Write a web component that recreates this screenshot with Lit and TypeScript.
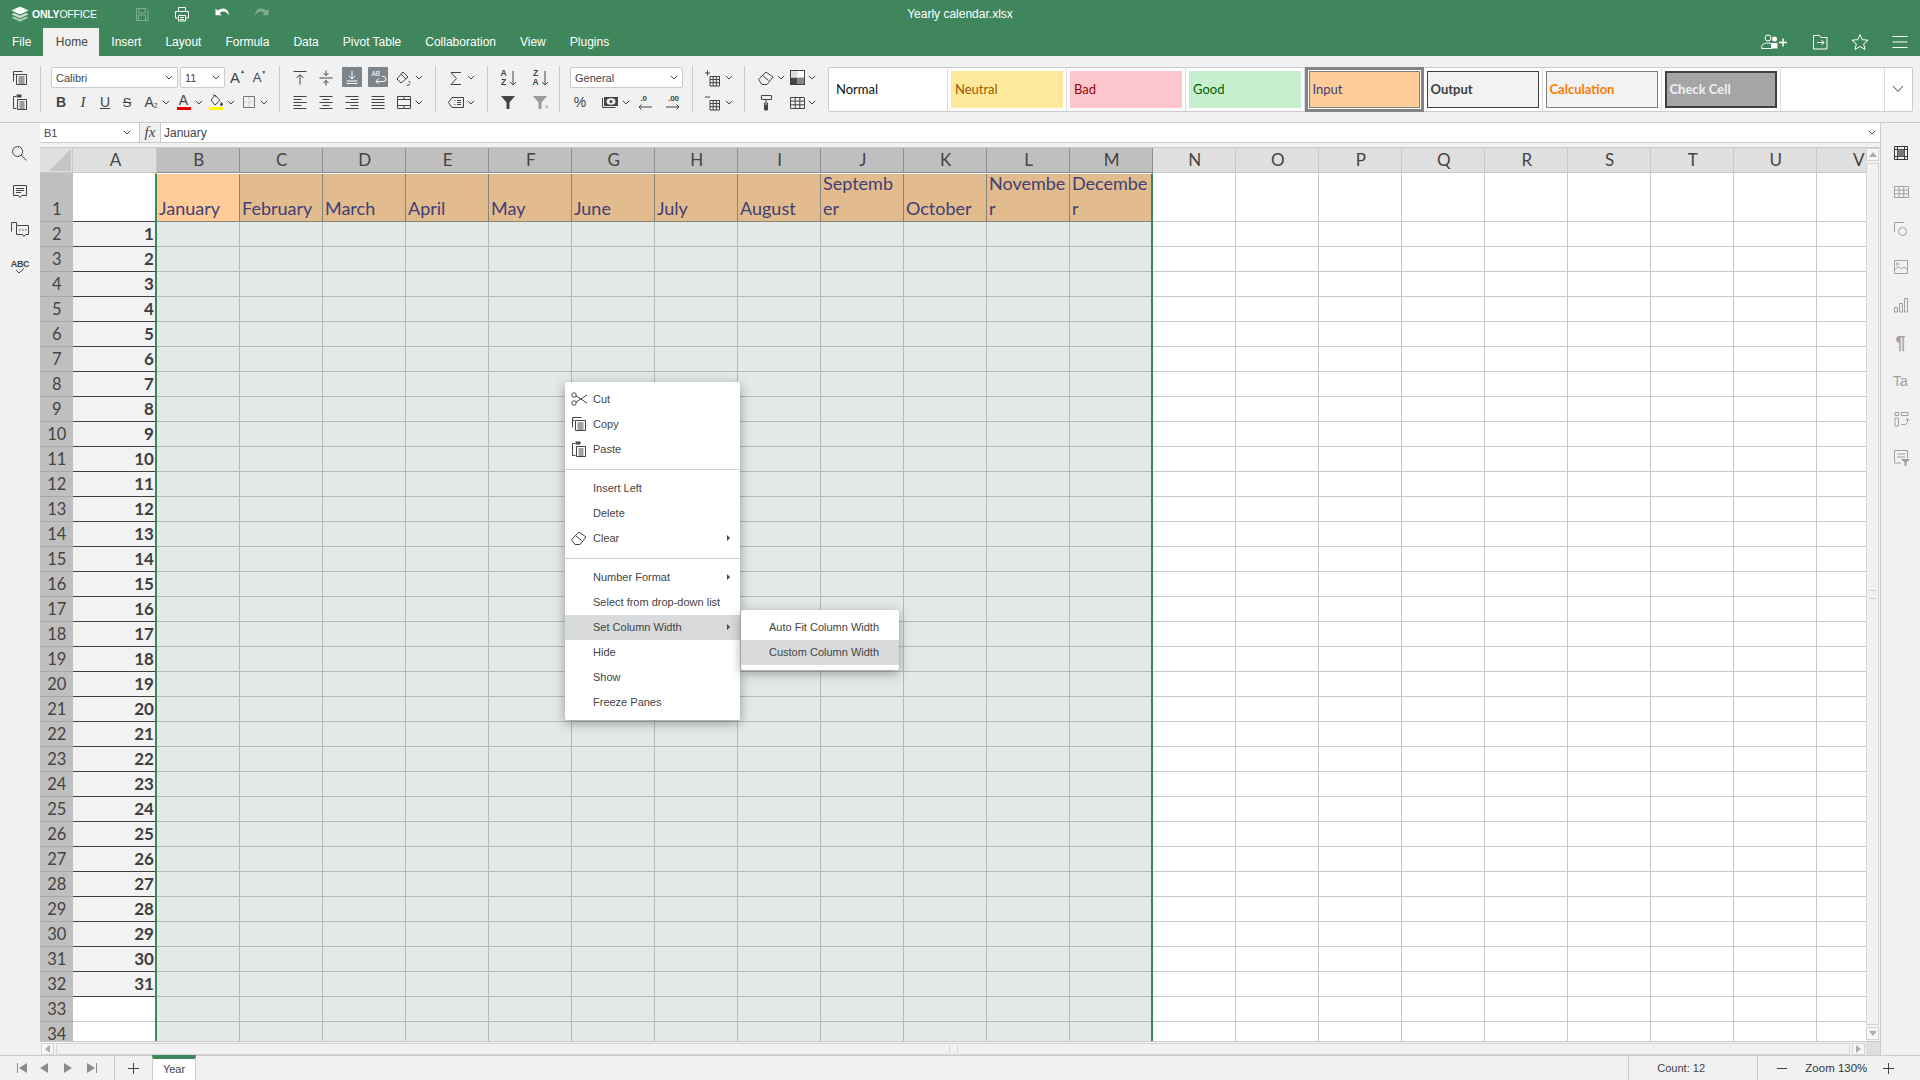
import { LitElement, html, css } from "lit";
import { customElement } from "lit/decorators.js";

const ic = (d: string, cls = "", w = 20, h = 20) =>
  html`<svg class="ic ${cls}" width=${w} height=${h} viewBox="0 0 ${w} ${h}"><path d=${d}></path></svg>`;
const chev = html`<svg class="chev" width="8" height="5" viewBox="0 0 8 5"><path d="M.8.8 4 4 7.2.8"></path></svg>`;
const D = {
  copy: "M3.500 13.500v-10h9 M3.500 6.500h2 M6.500 6.500h10v10h-10z M8.500 9h6 M8.500 11h6 M8.500 13h6 M8.500 15h6",
  paste: "M6 4.500H3.500v12h3 M7.500 7.500h9v10h-9z M9.500 10h5 M9.500 12h5 M9.500 14h5 M9.500 16h5",
  save: "M5 4.500h9l2 2v10H4.500v-12z M7 5v4h6V5 M6.500 16v-5h7v5",
  print: "M6.500 7V3.500h7V7 M6.500 14h-3V7.500h13V14h-3 M6.500 11.500h7v5.500h-7z M8 13.500h4 M8 15.500h4",
  undo: "M3.500 5v6.300h6.300L7.500 9c1-.9 2.200-1.500 3.600-1.500 2.500 0 4.400 1.400 5.400 3.800.9-3.700-2-6.800-5.500-6.800-1.800 0-3.400.7-4.700 1.900z",
  redo: "M16.500 5v6.300h-6.300L12.500 9c-1-.9-2.200-1.500-3.600-1.500-2.500 0-4.400 1.400-5.400 3.800-.9-3.700 2-6.800 5.500-6.800 1.800 0 3.400.7 4.700 1.900z",
  ttop: "M3.500 3.500h13 M10 16.500V7 M6.500 10 10 6.500l3.500 3.500",
  tmid: "M3.500 10h13 M10 2.500v5 M7.500 5 10 7.500 12.500 5 M10 17.500v-5 M7.500 15 10 12.500 12.500 15",
  tbot: "M4.500 16.500h11 M4.500 14h11 M10 4v8 M7 9l3 3 3-3",
  wrap: "M14 9.500h1.500a2.500 2.500 0 0 1 0 5H8 M10.500 11.500 8 14.500l2.500 2.500",
  orient: "M3 11l6-7 5 5-7 6z M7 6l5 5 M14.500 13l2 2M16 16.500l-3 1",
  left: "M3.500 4.500h13 M3.500 7.500h8 M3.500 10.500h13 M3.500 13.500h8 M3.500 16.500h13",
  center: "M3.500 4.500h13 M6.500 7.500h7 M3.500 10.500h13 M6.500 13.500h7 M3.500 16.500h13",
  right: "M3.500 4.500h13 M8.500 7.500h8 M3.500 10.500h13 M8.500 13.500h8 M3.500 16.500h13",
  just: "M3.500 4.500h13 M3.500 7.500h13 M3.500 10.500h13 M3.500 13.500h13 M3.500 16.500h13",
  merge: "M3.500 4.500h13v12h-13z M3.500 7.500h13 M3.500 13.500h13 M10 13.500v3 M10 4.500v3",
  sum: "M15 4.500H5l5.500 6-5.500 6h10",
  named: "M6 5.500h11.500v10H6L2.500 10.500z M8.500 8.500h1 M8.500 12.500h1 M11 8.500h4 M11 10.500h4 M11 12.500h4",
  arrowDown: "M4 1v14 M1 12l3 3 3-3",
  filterFill: "M3 4h14l-5.500 6.500V17h-3v-6.500z",
  eraser: "M2.500 11.500 10 4l7 5-6 7.500H6z M6.500 7.500l6 5",
  moneyBack: "M1.500 6v9.500h13",
  decL: "M18 15H5 M7.500 12.500 5 15l2.500 2.500",
  decR: "M2 15h13 M12.500 12.500 15 15l-2.500 2.500",
  inscell: "M6 8.500h9.500v9.500H6z M6 11.500h9.500 M6 14.700h9.500 M9.200 8.500v9.500 M12.300 8.500v9.500 M1 5h5 M3.500 2.500v5",
  delcell: "M6 8.500h9.500v9.500H6z M6 11.500h9.500 M6 14.700h9.500 M9.200 8.500v9.500 M12.300 8.500v9.500 M1 5h5",
  table: "M3.500 5.500h14v11h-14z M3.500 9.100h14 M3.500 12.800h14 M8.200 5.500v11 M12.800 5.500v11",
  search: "M12.600 8.500a5 5 0 1 1-10 0 5 5 0 0 1 10 0z M11.200 12 16.500 17.500",
  comment: "M3.500 4.500h13v10h-5l-1.500 2-1.500-2h-5z M6 7.500h8 M6 9.500h8 M6 11.500h5",
  chat: "M6.500 6.500V3.500h-5v9 M6.500 6.500h12v9h-3L14 17.500 12.500 15.500h-6z M9 11h1.500 M12 11h1.500 M15 11h1.500",
  shape: "M3.500 13V3.500H13 M11.500 8.500a4 4 0 1 1 0 8 4 4 0 0 1 0-8z",
  image: "M3.500 3.500h13v13h-13z M3.500 13l4-3.500 3 2.500 2.500-2 3.500 3 M7.500 7a1 1 0 1 1-2 0 1 1 0 0 1 2 0z",
  chart: "M3.500 12.500h3v4.500h-3z M8.500 8.500h3v8.500h-3z M13.500 3.500h3v13.500h-3z",
  textart: "M5 14c2-3 8-3 10 0",
  pivot: "M4 3.500h3.500v3H4z M10 3.500h7v3h-7z M4 9h3.500v8H4z M10 15.500h4.500l2-2V10 M14.500 11.500l2-2 2 2",
  slicer: "M3.500 16V3.500h13v8 M6 7h8 M6 10h8 M3.500 16H10",
};

const COLS = "ABCDEFGHIJKLMNOPQRSTUV".split("");
const MONTHS = ["January","February","March","April","May","June","July","August","Septemb\ner","October","Novembe\nr","Decembe\nr"];

@customElement("app-root")
export class AppRoot extends LitElement {
  static styles = css`
    :host { display: block; height: 100vh; font-family: "Liberation Sans", Arial, sans-serif; font-size: 11px; color: #444; }
    * { box-sizing: border-box; }
    .app { position: relative; height: 100%; display: flex; flex-direction: column; background: #f1f1f1; overflow: hidden; }
    .ic { display: block; flex: none; fill: none; stroke: currentColor; stroke-width: 1; }
    .chev { display: block; flex: none; fill: none; stroke: #444; stroke-width: 1; }
    .solid { fill: currentColor; stroke: none; }

    .title { height: 28px; background: #40865c; color: #fff; display: flex; align-items: center; position: relative; flex: none; }
    .logo { display: flex; align-items: center; margin-left: 11px; width: 111px; gap: 3px; }
    .logo b { font-size: 10.500px; letter-spacing: -.2px; font-weight: 700; }
    .logo i { font-style: normal; font-weight: 400; }
    .qa { width: 40px; display: flex; justify-content: center; }
    .dim { color: #7fae91; }
    .doc { position: absolute; left: 0; right: 0; text-align: center; font-size: 12px; }

    .tabs { height: 28px; background: #40865c; color: #fff; display: flex; align-items: stretch; font-size: 12px; flex: none; }
    .tab { padding: 0 12px; display: flex; align-items: center; }
    .tab.on { background: #f1f1f1; color: #444; padding: 0 11.500px 0 12.500px; }
    .tabs .sp { flex: 1; }
    .hic { width: 40px; display: flex; align-items: center; justify-content: center; margin-top: -1px; }
    .hic.fo { margin-left: 6px; }

    .tb { height: 67px; flex: none; display: flex; align-items: center; border-bottom: 1px solid #cbcbcb; }
    .g { height: 46px; padding-top: 1px; display: flex; flex-direction: column; gap: 3.500px; flex: none; border-right: 1px solid #cbcbcb; justify-content: flex-start; }
    .g.last { border-right: 0; }
    .r { height: 21px; display: flex; align-items: center; flex: none; }
    .g0 { width: 41px; }
    .g1 { width: 239px; padding-left: 10px; }
    .g2 { width: 156px; padding-left: 7px; }
    .g3 { width: 52px; padding-left: 10px; }
    .g4 { width: 72px; padding-left: 4px; }
    .g5 { width: 133px; padding-left: 10px; }
    .g6 { width: 52px; padding-left: 11px; }
    .g7 { width: 82.500px; padding-left: 11px; }
    .c { width: 20px; display: flex; justify-content: center; align-items: center; flex: none; font-size: 14px; color: #444; height: 20px; }
    .g0 .c { margin-left: 10px; }
    .w22 { width: 22px; }
    .firstb { margin-left: -1px; }
    .bc { display: flex; align-items: center; flex: none; width: 32.500px; }
    .bc .c { margin-right: 1px; }
    .bcn { width: 31px; }
    .act { background: #7d858c; border-radius: 1px; color: #fff; width: 20px; height: 20px; margin-top: -2px; }
    .cwrap { width: 26px; display: flex; justify-content: center; flex: none; }
    .combo { height: 21px; background: #fff; border: 1px solid #cbcbcb; border-radius: 2px; display: flex; align-items: center; justify-content: space-between; padding: 0 4px; flex: none; color: #444; }
    .cf { width: 127px; }
    .cs { width: 44.500px; margin-left: 2px; }
    .cg { width: 113px; }
    .ab { width: 22px; display: flex; justify-content: center; font-size: 15px; }
    .ab.big { margin-left: 2px; }
    .ab.sm { font-size: 13px; }
    .ab small { font-size: 5px; position: relative; top: -1px; }
    .fmt-b { font-weight: 700; }
    .fmt-i { font-style: italic; font-family: "Liberation Serif"; font-size: 15px; }
    .fmt-u { text-decoration: underline; }
    .fmt-s { text-decoration: line-through; font-size: 13px; }
    .cl { flex-direction: column; line-height: 13px; }
    .bar { display: block; width: 14px; height: 3px; }
    .red { background: #e00; }
    .yel { background: #ff0; }
    .sub { font-size: 7px; position: relative; top: 3px; }
    .mL11 { margin-left: 11px; }
    .mL10 { margin-left: 10px; }
    .mL3 { margin-left: 3px; }
    .mR11 { margin-right: 11px; }
    .azc { font-size: 8.500px; font-weight: 700; line-height: 9px; display: flex; flex-direction: column; width: 8px; text-align: center; }
    .sortc { width: 32px; display: flex; justify-content: center; align-items: center; flex: none; height: 20px; gap: 1px; }
    .fclear { color: #9a9a9a; position: relative; }
    .fclear i { position: absolute; right: 7px; bottom: 1px; font-size: 8px; font-style: normal; line-height: 8px; }
    .pct { font-size: 14px; }
    .dec { position: relative; width: 20px; height: 20px; font-size: 8px; font-weight: 700; display: block; flex: none; text-align: center; line-height: 14px; }
    .dec .ic { position: absolute; left: 0; top: 0; }
    .gal { width: 1085px; height: 45px; background: #fff; border: 1px solid #cbcbcb; border-radius: 2px; display: flex; flex: none; }
    .gi { width: 119px; border-right: 1px solid #dcdcdc; padding: 3px 3px; flex: none; font-family: Lato, "Liberation Sans", sans-serif; font-size: 13px; }
    .gi span { display: flex; align-items: center; height: 100%; padding-left: 4.500px; }
    .gi.sel { border: 3px solid #848484; padding: 1px 0; margin: -1px 0; height: 45px; }
    .gi.sel span { margin: 0 1px; padding-left: 3px; }
    .s-normal { color: #111; }
    .s-neutral { background: #fee99b; color: #9c5700; }
    .s-bad { background: #fec7ce; color: #9c0006; }
    .s-good { background: #c6efce; color: #006100; }
    .s-input { background: #ffcc99; color: #3f3f76; border: 1px solid #7f7f7f; }
    .gi span.s-output { padding-left: 3px; background: #f2f2f2; color: #3f3f3f; border: 1px solid #3f3f3f; font-weight: 700; }
    .gi span.s-calc { padding-left: 3px; background: #f2f2f2; color: #fa7d00; border: 1px solid #7f7f7f; font-weight: 700; }
    .gi span.s-check { padding-left: 3px; background: #a5a5a5; color: #f2f2f2; border: 2px solid #3f3f3f; font-weight: 700; }
    .gfill { width: 104px; border-right: 1px solid #dcdcdc; flex: none; }
    .gmore { flex: 1; display: flex; align-items: center; justify-content: center; }
    .gmore svg { fill: none; stroke: #444; }

    .main { flex: 1; min-height: 0; display: flex; }
    .lp { width: 40px; flex: none; padding-top: 11px; display: flex; flex-direction: column; align-items: center; }
    .lp div { height: 38px; display: flex; align-items: center; justify-content: center; }
    .abc { font-size: 9px; font-weight: 700; display: flex; flex-direction: column; align-items: center; line-height: 8px; letter-spacing: -.3px; }
    .rp { width: 40px; flex: none; border-left: 1px solid #cbcbcb; padding-top: 11px; display: flex; flex-direction: column; align-items: center; color: #a0a0a0; }
    .rp div { height: 38px; display: flex; align-items: center; justify-content: center; }
    .rp .on { color: #333; }
    .para { font-size: 18px; font-weight: 700; }
    .ta { font-size: 14px; flex-direction: column; line-height: 12px; }
    .ta svg { margin-top: -9px; height: 10px; }
    .center { flex: 1; min-width: 0; display: flex; flex-direction: column; }
    .fb { height: 20px; flex: none; background: #fff; display: flex; align-items: center; border-bottom: 1px solid #cbcbcb; }
    .name { width: 100px; height: 100%; display: flex; align-items: center; justify-content: space-between; padding: 0 8px 0 4px; border-right: 1px solid #cbcbcb; flex: none; }
    .fxb { width: 21px; height: 100%; background: #f1f1f1; border-right: 1px solid #cbcbcb; font-family: "Liberation Serif"; font-style: italic; font-size: 15px; display: flex; align-items: center; justify-content: center; flex: none; }
    .ftxt { flex: 1; padding-left: 3px; font-size: 12px; }
    .fchev { padding-right: 4px; }
    .split { height: 4px; flex: none; }
    .wk { flex: 1; min-height: 0; display: flex; }
    .sheet { flex: 1; min-width: 0; position: relative; overflow: hidden; background: #fff; border-top: 1px solid #cbcbcb; }
    .grid { display: grid; grid-template-columns: 33.400px 83.600px repeat(21, 83px); grid-template-rows: 25px 49px repeat(33, 25px); }
    .cell { border-right: 1px solid #c8c8c8; border-bottom: 1px solid #c8c8c8; font-family: Lato, sans-serif; display: flex; overflow: hidden; min-width: 0; }
    .corner { background: #dfdfdf; display: flex; align-items: flex-end; justify-content: flex-end; padding: 0 1px 1px 0; }
    .ch { background: #dfdfdf; font-size: 17px; justify-content: center; align-items: center; color: #444; padding: 0 0 2px 1.500px; }
    .ch.sel { background: #bfbfbf; border-color: #8f8f8f; }
    .rh { background: #bfbfbf; border-right: 0; border-bottom-color: #a8a8a8; font-size: 16.500px; justify-content: center; align-items: flex-end; line-height: 24px; color: #444; }
    .aval { background: #f2f2f2; border-bottom-color: #3f3f3f; color: #3f3f3f; font-weight: 700; font-size: 17px; justify-content: flex-end; align-items: flex-end; padding-right: 3px; line-height: 24px; border-right: 0; }
    .a1c { border-bottom-color: #3f3f3f; border-right: 0; }
    .sel-c { background: #e3e9e5; border-color: #b4bab6; }
    .m { background: #e2bc8e; border-color: #86857c; color: #3f3f76; font-size: 18px; line-height: 25px; white-space: pre; align-items: flex-end; padding-left: 2px; }
    .m.first { background: #ffcc99; }
    .selbox { position: absolute; left: 115.300px; width: 998.200px; top: 25px; height: 900px; border-left: 2px solid #40865c; border-right: 2px solid #40865c; border-top: 1px solid #fff; pointer-events: none; }
    .vs { width: 14px; flex: none; padding: 0 1px 1px 0; display: flex; flex-direction: column; gap: 2px; background: #f1f1f1; border-top: 1px solid #cbcbcb; }
    .sbtn { width: 13px; height: 13px; border: 1px solid #d4d4d4; background: #f7f7f7; flex: none; display: flex; align-items: center; justify-content: center; }
    .tri { width: 0; height: 0; border-style: solid; border-color: transparent; }
    .tu { border-width: 0 4px 5px; border-bottom-color: #adadad; }
    .td { border-width: 5px 4px 0; border-top-color: #adadad; }
    .tl { border-width: 4px 5px 4px 0; border-right-color: #adadad; }
    .tr { border-width: 4px 0 4px 5px; border-left-color: #adadad; }
    .track { flex: 1; border: 1px solid #d4d4d4; display: flex; align-items: center; justify-content: center; }
    .gv { width: 7px; height: 9px; border-top: 1px solid #cfcfcf; border-bottom: 1px solid #cfcfcf; }
    .gv2 { width: 9px; height: 7px; border-left: 1px solid #cfcfcf; border-right: 1px solid #cfcfcf; }
    .hs { height: 14px; flex: none; display: flex; background: #f1f1f1; border-top: 1px solid #cbcbcb; }
    .hsc { flex: 1; display: flex; padding: 1px; gap: 2px; }
    .hsc .track { height: 12px; }
    .hsc .sbtn { height: 12px; }
    .corner2 { width: 14px; background: #dedede; flex: none; }

    .st { height: 25px; flex: none; border-top: 1px solid #cbcbcb; display: flex; align-items: stretch; }
    .nav { width: 115px; border-right: 1px solid #cbcbcb; display: flex; align-items: center; padding-left: 16px; gap: 12px; }
    .nb { width: 12px; display: flex; align-items: center; justify-content: center; }
    .nb.tight { margin-left: -2px; }
    .nb svg { fill: #8c8c8c; }
    .add { width: 37px; display: flex; align-items: center; justify-content: center; }
    .add svg, .zb svg { stroke: #444; fill: none; }
    .ytab { width: 44px; background: #fff; border: 1px solid #cbcbcb; border-width: 4px 1px 0; border-top-color: #40865c; display: flex; align-items: center; justify-content: center; margin-top: -1px; padding-bottom: 1px; }
    .st .sp { flex: 1; }
    .cnt { width: 130px; border-left: 1px solid #cbcbcb; border-right: 1px solid #cbcbcb; display: flex; align-items: center; padding-left: 28px; }
    .zm { display: flex; align-items: center; width: 161.700px; }
    .zb { width: 47px; display: flex; justify-content: center; }
    .zt { width: 60px; text-align: center; font-size: 11.500px; white-space: nowrap; color: #333; }

    .menu { position: absolute; background: #fff; border-radius: 2px; box-shadow: 0 3px 12px rgba(0,0,0,.35); padding: 5px 0; color: #444; white-space: nowrap; }
    .m1 { left: 565px; top: 382px; width: 175px; height: 338px; }
    .m2 { left: 741px; top: 610px; width: 158px; height: 60px; }
    .mi { height: 25px; display: flex; align-items: center; padding: 0 0 1px 28px; position: relative; }
    .mi.hl { background: #d8dadc; }
    .mi .mic { position: absolute; left: 4px; top: 2px; color: #444; }
    .mi .ar { position: absolute; right: 10px; top: 9px; width: 0; height: 0; border-style: solid; border-color: transparent; border-width: 3px 0 3px 3.500px; border-left-color: #444; }
    .mdiv { height: 1px; background: #d0d0d0; margin: 7px 0 6px; }
  `;

  private gridCells() {
    const cells: unknown[] = [];
    cells.push(html`<div class="cell corner"><svg width="22" height="22" viewBox="0 0 22 22"><path d="M22 0V22H0z" fill="#c4c4c4"></path></svg></div>`);
    COLS.forEach((c, i) => {
      cells.push(html`<div class="cell ch ${i >= 1 && i <= 12 ? "sel" : ""}">${c}</div>`);
    });
    for (let r = 1; r <= 34; r++) {
      cells.push(html`<div class="cell rh">${r}</div>`);
      COLS.forEach((_c, i) => {
        if (i === 0) {
          if (r === 1) cells.push(html`<div class="cell a1c"></div>`);
          else if (r <= 32) cells.push(html`<div class="cell aval">${r - 1}</div>`);
          else cells.push(html`<div class="cell"></div>`);
        } else if (i <= 12) {
          if (r === 1) cells.push(html`<div class="cell m ${i === 1 ? "first" : ""}">${MONTHS[i - 1]}</div>`);
          else cells.push(html`<div class="cell sel-c"></div>`);
        } else cells.push(html`<div class="cell"></div>`);
      });
    }
    return cells;
  }

  render() {
    const c = (d: string) => html`<div class="c">${ic(d)}</div>`;
    const scissors = html`<svg class="ic" width="20" height="20" viewBox="0 0 20 20"><circle cx="5" cy="6" r="2.200"></circle><circle cx="5" cy="14" r="2.200"></circle><path d="M7 7l11 7 M7 13l11-7"></path></svg>`;
    const pasteIcon = html`<svg class="ic" width="20" height="20" viewBox="0 0 20 20"><path d=${D.paste}></path><path d="M6.500 2.500h5v3h-5z" fill="#444" stroke="none"></path></svg>`;
    return html`<div class="app">
      <div class="title">
        <div class="logo">
          <svg width="18" height="16" viewBox="0 0 18 16" fill="#fff"><path d="M9 .5 17.500 4.500 9 8.500.5 4.500z"></path><path opacity=".75" d="M3 7 9 9.800 15 7l2.500 1.200L9 12.200.5 8.200z"></path><path opacity=".55" d="M3 10.500 9 13.300l6-2.800 2.500 1.200L9 15.700.5 11.700z"></path></svg>
          <b>ONLY<i>OFFICE</i></b>
        </div>
        <div class="qa dim">${ic(D.save)}</div>
        <div class="qa">${ic(D.print)}</div>
        <div class="qa">${ic(D.undo, "solid")}</div>
        <div class="qa dim">${ic(D.redo, "solid")}</div>
        <div class="doc">Yearly calendar.xlsx</div>
      </div>
      <div class="tabs">
        <div class="tab">File</div><div class="tab on">Home</div><div class="tab">Insert</div><div class="tab">Layout</div><div class="tab">Formula</div><div class="tab">Data</div><div class="tab">Pivot Table</div><div class="tab">Collaboration</div><div class="tab">View</div><div class="tab">Plugins</div>
        <div class="sp"></div>
        <div class="hic"><svg class="ic" width="28" height="20" viewBox="0 0 28 20"><circle cx="8" cy="6" r="3"></circle><path d="M1.500 16.500c0-4 2.500-5.500 6.500-5.500 1.500 0 2.500.2 3.500.7v4.800z"></path><circle cx="14.500" cy="7" r="2.500" fill="#fff" stroke="none"></circle><path d="M11.500 11h6v5.500h-6z" fill="#fff" stroke="none"></path><path d="M19 10.500h8 M23 6.500v8" stroke-width="1.500"></path></svg></div>
        <div class="hic fo">${ic("M3.500 3.500h6l1.500 2h6v11.500H3.500z M7 10.500h7 M11.500 8l2.500 2.500-2.500 2.500")}</div>
        <div class="hic">${ic("M10 2.500l2.300 5.200 5.700.5-4.300 3.700 1.300 5.600-5-3-5 3 1.300-5.600L2 8.200l5.700-.5z")}</div>
        <div class="hic">${ic("M2.500 4.500h15 M2.500 10h15 M2.500 15.500h15")}</div>
      </div>
      <div class="tb">
        <div class="g g0"><div class="r">${c(D.copy)}</div><div class="r"><div class="c">${pasteIcon}</div></div></div>
        <div class="g g1">
          <div class="r">
            <div class="combo cf">Calibri ${chev}</div><div class="combo cs">11 ${chev}</div>
            <div class="ab big">A<small>▲</small></div><div class="ab sm">A<small>▼</small></div>
          </div>
          <div class="r">
            <div class="c w22 fmt-b firstb">B</div><div class="c w22 fmt-i">I</div><div class="c w22 fmt-u">U</div><div class="c w22 fmt-s">S</div>
            <div class="bc mL3"><div class="c">A<span class="sub">2</span></div>${chev}</div>
            <div class="bc"><div class="c cl">A<i class="bar red"></i></div>${chev}</div>
            <div class="bc"><div class="c cl"><svg class="ic" width="16" height="13" viewBox="0 0 16 13"><path d="M7 1 3 6l4 5 5-4.500z M5 .5l3 2"></path><path d="M13.500 8.500l1 2a1 1 0 1 1-2 0z" fill="#444"></path></svg><i class="bar yel"></i></div>${chev}</div>
            <div class="bc"><div class="c"><svg class="ic" width="20" height="20" viewBox="0 0 20 20"><path d="M4.500 4.500h11v11h-11z" stroke="#777"></path><path d="M10 5v10 M5 10h10" stroke="#bbb" stroke-dasharray="1 1"></path></svg></div>${chev}</div>
          </div>
        </div>
        <div class="g g2">
          <div class="r">
            <div class="cwrap">${ic(D.ttop)}</div><div class="cwrap">${ic(D.tmid)}</div><div class="cwrap"><div class="c act">${ic(D.tbot)}</div></div>
            <div class="cwrap"><div class="c act"><svg class="ic" width="20" height="20" viewBox="0 0 20 20"><text x="3.500" y="9" font-size="6.500" fill="#fff" stroke="none" font-family="Liberation Sans">AB</text><path d=${D.wrap}></path></svg></div></div>
            <div class="bc mL3">${c(D.orient)}${chev}</div>
          </div>
          <div class="r">
            <div class="cwrap">${ic(D.left)}</div><div class="cwrap">${ic(D.center)}</div><div class="cwrap">${ic(D.right)}</div><div class="cwrap">${ic(D.just)}</div>
            <div class="bc mL3">${c(D.merge)}${chev}</div>
          </div>
        </div>
        <div class="g g3"><div class="r"><div class="bc">${c(D.sum)}${chev}</div></div><div class="r"><div class="bc">${c(D.named)}${chev}</div></div></div>
        <div class="g g4">
          <div class="r">
            <div class="sortc"><div class="azc"><span>A</span><span>Z</span></div>${ic(D.arrowDown, "", 8, 16)}</div>
            <div class="sortc"><div class="azc"><span>Z</span><span>A</span></div>${ic(D.arrowDown, "", 8, 16)}</div>
          </div>
          <div class="r">
            <div class="sortc">${ic(D.filterFill, "solid")}</div>
            <div class="sortc fclear">${ic(D.filterFill, "solid")}<i>×</i></div>
          </div>
        </div>
        <div class="g g5">
          <div class="r"><div class="combo cg">General ${chev}</div></div>
          <div class="r">
            <div class="c pct">%</div>
            <div class="bc mL11"><div class="c"><svg class="ic" width="20" height="20" viewBox="0 0 20 20"><path d=${D.moneyBack}></path><path d="M3 5h14v9H3z" fill="#444" stroke="none"></path><ellipse cx="10" cy="9.500" rx="4.500" ry="3.200" fill="#f1f1f1" stroke="none"></ellipse><circle cx="10" cy="9.500" r="1.500" fill="#444" stroke="none"></circle></svg></div>${chev}</div>
            <div class="dec">.0${ic(D.decL)}</div>
            <div class="dec mL10">.00${ic(D.decR)}</div>
          </div>
        </div>
        <div class="g g6"><div class="r"><div class="bc">${c(D.inscell)}${chev}</div></div><div class="r"><div class="bc">${c(D.delcell)}${chev}</div></div></div>
        <div class="g g7 last">
          <div class="r"><div class="bc bcn">${c(D.eraser)}${chev}</div><div class="bc"><div class="c"><svg width="15" height="15" viewBox="0 0 15 15"><rect x=".5" y=".5" width="14" height="14" fill="#fff" stroke="#444"></rect><rect x="1" y="7.500" width="6.500" height="6.500" fill="#444"></rect><rect x="7.500" y="7.500" width="6.500" height="6.500" fill="#888"></rect><rect x="1" y="1" width="6.500" height="6.500" fill="#ddd"></rect></svg></div>${chev}</div></div>
          <div class="r"><div class="c mR11"><svg class="ic" width="20" height="20" viewBox="0 0 20 20"><path d="M5.500 3.500h10v4h-10z M10 7.500v3 M8.500 11h3v6.500h-3z" fill="none"></path><path d="M8.500 13h3v5h-3z" fill="#444"></path></svg></div><div class="bc">${c(D.table)}${chev}</div></div>
        </div>
        <div class="gal">
          <div class="gi"><span class="s-normal">Normal</span></div>
          <div class="gi"><span class="s-neutral">Neutral</span></div>
          <div class="gi"><span class="s-bad">Bad</span></div>
          <div class="gi"><span class="s-good">Good</span></div>
          <div class="gi sel"><span class="s-input">Input</span></div>
          <div class="gi"><span class="s-output">Output</span></div>
          <div class="gi"><span class="s-calc">Calculation</span></div>
          <div class="gi"><span class="s-check">Check Cell</span></div>
          <div class="gfill"></div>
          <div class="gmore"><svg width="12" height="8" viewBox="0 0 12 8"><path d="M1 1l5 5.500L11 1"></path></svg></div>
        </div>
      </div>
      <div class="main">
        <div class="lp">
          <div>${ic(D.search)}</div>
          <div>${ic(D.comment)}</div>
          <div>${ic(D.chat)}</div>
          <div><span class="abc">ABC<svg class="ic" width="12" height="6" viewBox="0 0 12 6"><path d="M2 2l3 3 5-4.500"></path></svg></span></div>
        </div>
        <div class="center">
          <div class="fb">
            <div class="name">B1 ${chev}</div>
            <div class="fxb">fx</div>
            <div class="ftxt">January</div>
            <div class="fchev">${chev}</div>
          </div>
          <div class="split"></div>
          <div class="wk">
            <div class="sheet">
              <div class="grid">${this.gridCells()}</div>
              <div class="selbox"></div>
            </div>
            <div class="vs">
              <div class="sbtn"><i class="tri tu"></i></div>
              <div class="track"><div class="gv"></div></div>
              <div class="sbtn"><i class="tri td"></i></div>
            </div>
          </div>
          <div class="hs">
            <div class="hsc">
              <div class="sbtn"><i class="tri tl"></i></div>
              <div class="track"><div class="gv2"></div></div>
              <div class="sbtn"><i class="tri tr"></i></div>
            </div>
            <div class="corner2"></div>
          </div>
        </div>
        <div class="rp">
          <div class="on"><svg class="ic" width="20" height="20" viewBox="0 0 20 20"><path d="M3.500 3.500h13v13h-13z M3.500 6.500h13 M3.500 13.500h13 M6.500 3.500v13 M13.500 3.500v13"></path><path d="M6.500 6.500h7v7h-7z" fill="#777" stroke="none"></path></svg></div>
          <div>${ic(D.table)}</div>
          <div>${ic(D.shape)}</div>
          <div>${ic(D.image)}</div>
          <div>${ic(D.chart)}</div>
          <div class="para">¶</div>
          <div class="ta"><span>Ta</span>${ic(D.textart)}</div>
          <div>${ic(D.pivot)}</div>
          <div><svg class="ic" width="20" height="20" viewBox="0 0 20 20"><path d=${D.slicer}></path><path d="M10 12h9l-3.500 3.500V19h-2v-3.500z" fill="#a0a0a0" stroke="none"></path></svg></div>
        </div>
      </div>
      <div class="st">
        <div class="nav">
          <div class="nb"><svg width="12" height="12" viewBox="0 0 12 12"><path d="M1 1h1v10H1z M11 1v10L3 6z"></path></svg></div>
          <div class="nb tight"><svg width="10" height="12" viewBox="0 0 10 12"><path d="M9 1v10L1 6z"></path></svg></div>
          <div class="nb"><svg width="10" height="12" viewBox="0 0 10 12"><path d="M1 1v10l8-5z"></path></svg></div>
          <div class="nb"><svg width="12" height="12" viewBox="0 0 12 12"><path d="M1 1v10l8-5z M10 1h1v10h-1z"></path></svg></div>
        </div>
        <div class="add"><svg width="13" height="13" viewBox="0 0 13 13"><path d="M1 6.500h11 M6.500 1v11"></path></svg></div>
        <div class="ytab">Year</div>
        <div class="sp"></div>
        <div class="cnt">Count: 12</div>
        <div class="zm">
          <div class="zb"><svg width="12" height="3" viewBox="0 0 12 3"><path d="M1 1.500h10"></path></svg></div>
          <div class="zt">Zoom 130%</div>
          <div class="zb"><svg width="13" height="13" viewBox="0 0 13 13"><path d="M1 6.500h11 M6.500 1v11"></path></svg></div>
        </div>
      </div>
      <div class="menu m1">
        <div class="mi"><span class="mic">${scissors}</span>Cut</div>
        <div class="mi"><span class="mic">${ic(D.copy)}</span>Copy</div>
        <div class="mi"><span class="mic">${pasteIcon}</span>Paste</div>
        <div class="mdiv"></div>
        <div class="mi">Insert Left</div>
        <div class="mi">Delete</div>
        <div class="mi"><span class="mic">${ic(D.eraser)}</span>Clear<i class="ar"></i></div>
        <div class="mdiv"></div>
        <div class="mi">Number Format<i class="ar"></i></div>
        <div class="mi">Select from drop-down list</div>
        <div class="mi hl">Set Column Width<i class="ar"></i></div>
        <div class="mi">Hide</div>
        <div class="mi">Show</div>
        <div class="mi">Freeze Panes</div>
      </div>
      <div class="menu m2">
        <div class="mi">Auto Fit Column Width</div>
        <div class="mi hl">Custom Column Width</div>
      </div>
    </div>`;
  }
}
